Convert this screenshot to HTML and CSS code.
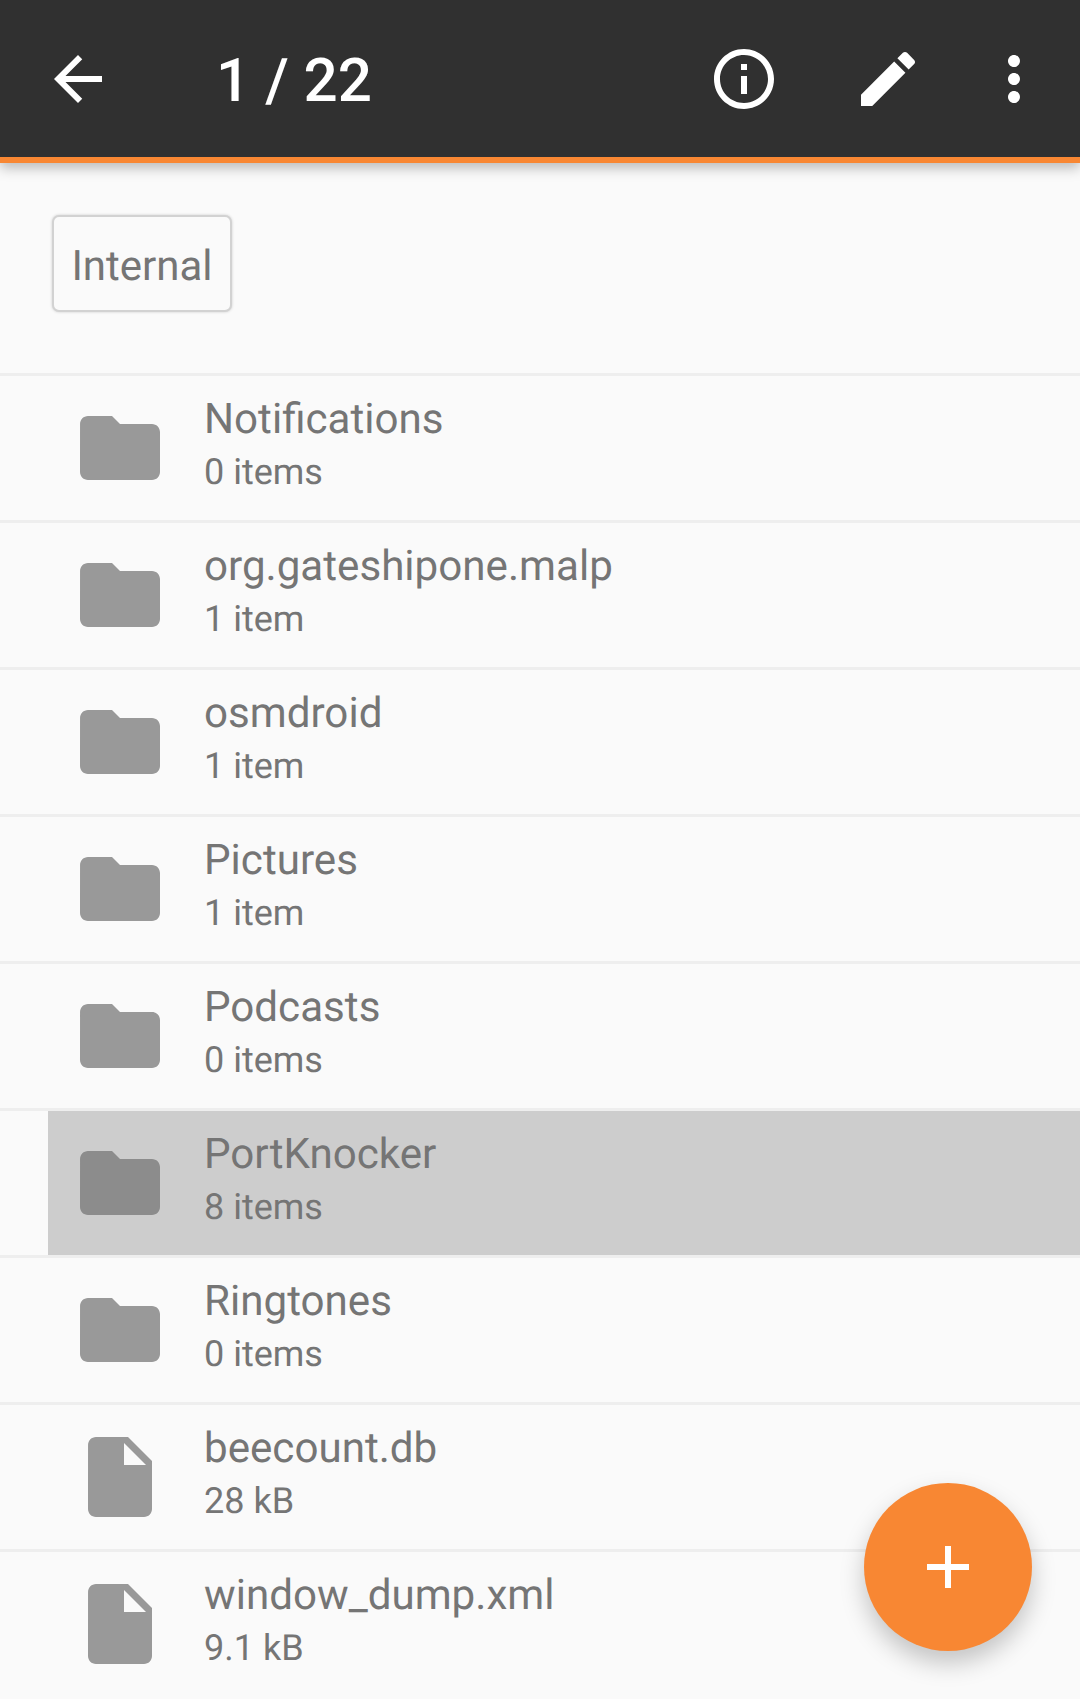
FILE: index.html
```html
<!DOCTYPE html>
<html lang="en">

<head>
  <meta charset="UTF-8">
  <title>Files</title>
  <link rel="stylesheet" href="styles.css">
</head>

<body>
  <svg class="defs" width="0" height="0">
    <symbol id="folder" viewBox="0 0 24 24"><path d="M10 4H4c-1.1 0-1.99.9-1.99 2L2 18c0 1.1.9 2 2 2h16c1.1 0 2-.9 2-2V8c0-1.1-.9-2-2-2h-8l-2-2z"/></symbol>
    <symbol id="file" viewBox="0 0 24 24"><path d="M6 2c-1.1 0-1.99.9-1.99 2L4 20c0 1.1.89 2 1.99 2H18c1.1 0 2-.9 2-2V8l-6-6H6zm7 7V3.5L18.5 9H13z"/></symbol>
  </svg>

  <div class="app-wrap">
    <header class="toolbar">
      <svg class="tool back" viewBox="0 0 24 24"><path d="M20 11H7.83l5.59-5.59L12 4l-8 8 8 8 1.41-1.41L7.83 13H20v-2z"/></svg>
      <div class="title">1 / 22</div>
      <svg class="tool info" viewBox="0 0 24 24"><path d="M11 17h2v-6h-2v6zm1-15C6.48 2 2 6.48 2 12s4.48 10 10 10 10-4.48 10-10S17.52 2 12 2zm0 18c-4.41 0-8-3.59-8-8s3.59-8 8-8 8 3.59 8 8-3.59 8-8 8zM11 9h2V7h-2v2z"/></svg>
      <svg class="tool edit" viewBox="0 0 24 24"><path d="M3 17.25V21h3.75L17.81 9.94l-3.75-3.75L3 17.25zM20.71 7.04c.39-.39.39-1.02 0-1.41l-2.34-2.34c-.39-.39-1.02-.39-1.41 0l-1.83 1.83 3.75 3.75 1.83-1.83z"/></svg>
      <svg class="tool more" viewBox="0 0 24 24"><path d="M12 8c1.1 0 2-.9 2-2s-.9-2-2-2-2 .9-2 2 .9 2 2 2zm0 2c-1.1 0-2 .9-2 2s.9 2 2 2 2-.9 2-2-.9-2-2-2zm0 6c-1.1 0-2 .9-2 2s.9 2 2 2 2-.9 2-2-.9-2-2-2z"/></svg>
    </header>

    <section class="crumbs">
      <div class="chip">Internal</div>
    </section>

    <main class="list">
      <div class="row">
        <svg class="row-icon"><use href="#folder"/></svg>
        <div class="row-text"><div class="name">Notifications</div><div class="meta">0 items</div></div>
      </div>
      <div class="row">
        <svg class="row-icon"><use href="#folder"/></svg>
        <div class="row-text"><div class="name">org.gateshipone.malp</div><div class="meta">1 item</div></div>
      </div>
      <div class="row">
        <svg class="row-icon"><use href="#folder"/></svg>
        <div class="row-text"><div class="name">osmdroid</div><div class="meta">1 item</div></div>
      </div>
      <div class="row">
        <svg class="row-icon"><use href="#folder"/></svg>
        <div class="row-text"><div class="name">Pictures</div><div class="meta">1 item</div></div>
      </div>
      <div class="row">
        <svg class="row-icon"><use href="#folder"/></svg>
        <div class="row-text"><div class="name">Podcasts</div><div class="meta">0 items</div></div>
      </div>
      <div class="row selected">
        <div class="row-inner">
          <svg class="row-icon"><use href="#folder"/></svg>
          <div class="row-text"><div class="name">PortKnocker</div><div class="meta">8 items</div></div>
        </div>
      </div>
      <div class="row">
        <svg class="row-icon"><use href="#folder"/></svg>
        <div class="row-text"><div class="name">Ringtones</div><div class="meta">0 items</div></div>
      </div>
      <div class="row">
        <svg class="row-icon"><use href="#file"/></svg>
        <div class="row-text"><div class="name">beecount.db</div><div class="meta">28 kB</div></div>
      </div>
      <div class="row">
        <svg class="row-icon"><use href="#file"/></svg>
        <div class="row-text"><div class="name">window_dump.xml</div><div class="meta">9.1 kB</div></div>
      </div>
    </main>

    <button class="fab">
      <svg viewBox="0 0 24 24"><path d="M19 13h-6v6h-2v-6H5v-2h6V5h2v6h6v2z"/></svg>
    </button>
  </div>
</body>

</html>
```

FILE: styles.css
```css
* {
  margin: 0;
  padding: 0;
  box-sizing: border-box;
}

body {
  font-family: Roboto, sans-serif;
  background-color: #fafafa;
  overflow: hidden;
  text-rendering: geometricPrecision;
}

.defs {
  position: absolute;
}

.app-wrap {
  position: relative;
  height: 1699px;
  overflow: hidden;
}

.toolbar {
  position: relative;
  z-index: 1;
  display: flex;
  align-items: center;
  height: 163px;
  padding: 0 30px 0 42px;
  background-color: #303030;
  border-bottom: 6px solid #f88733;
  box-shadow: 0 5px 12px rgba(0, 0, 0, 0.26);
}

.tool {
  flex: none;
  width: 72px;
  height: 72px;
  fill: #fff;
}

.title {
  flex: 1;
  margin-left: 102px;
  padding-top: 4px;
  color: #fff;
  font-size: 60.2px;
  font-weight: 500;
}

.edit {
  margin-left: 72px;
}

.more {
  margin-left: 54px;
}

.crumbs {
  height: 210px;
  padding: 52px 0 0 52px;
}

.chip {
  display: flex;
  align-items: center;
  justify-content: center;
  width: 180px;
  height: 97px;
  padding-top: 5px;
  color: #757575;
  font-size: 42px;
  background-color: #fafafa;
  border: 2px solid #d2d2d2;
  border-radius: 7px;
  box-shadow: 0 0 3px rgba(0, 0, 0, 0.18);
}

.row {
  display: flex;
  align-items: center;
  height: 147px;
  padding-left: 72px;
  border-top: 3px solid #eeeeee;
}

.row-icon {
  flex: none;
  width: 96px;
  height: 96px;
  fill: #999999;
}

.row-text {
  margin-left: 36px;
  padding-bottom: 9px;
  color: #757575;
}

.name {
  font-size: 42.15px;
  line-height: 56px;
}

.meta {
  font-size: 36px;
  line-height: 48px;
}

.selected {
  padding-left: 48px;
}

.row-inner {
  display: flex;
  align-items: center;
  flex: 1;
  height: 144px;
  padding-left: 24px;
  background-color: #cdcdcd;
}

.selected .row-icon {
  fill: #8c8c8c;
}

.fab {
  position: absolute;
  right: 48px;
  bottom: 48px;
  display: flex;
  align-items: center;
  justify-content: center;
  width: 168px;
  height: 168px;
  border: none;
  border-radius: 50%;
  background-color: #f88733;
  box-shadow: 0 12px 24px rgba(0, 0, 0, 0.22);
}

.fab svg {
  width: 72px;
  height: 72px;
  fill: #fff;
}
```
